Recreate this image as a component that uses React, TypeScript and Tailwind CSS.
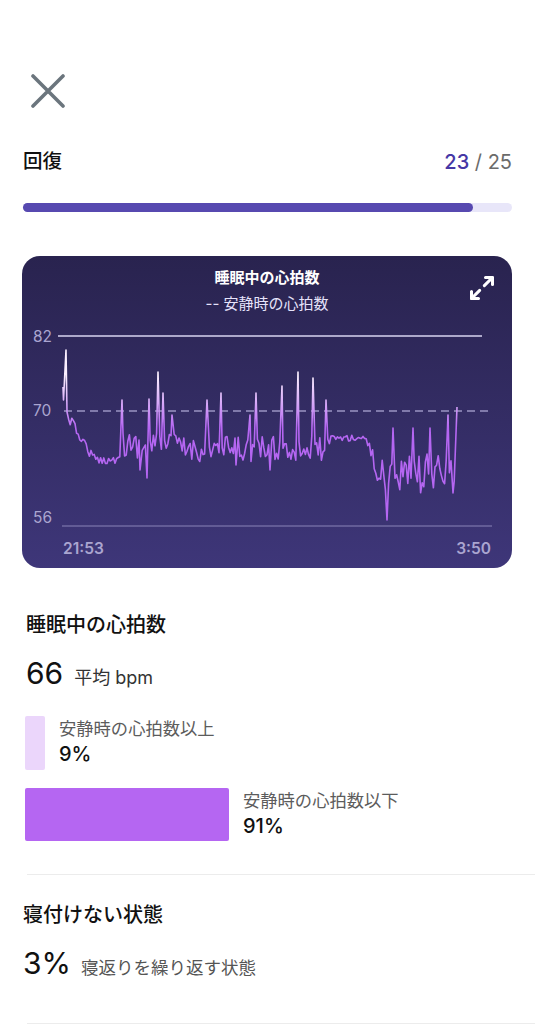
import React from "react";

const FONT = 'Inter, "Noto Sans CJK JP", sans-serif';

function rng(seed: number) {
  let s = seed;
  return () => {
    s = (s * 16807) % 2147483647;
    return (s - 1) / 2147483646;
  };
}

function buildPoints(): string {
  const r = rng(12345);
  const pts: [number, number][] = [];
  const base = (x: number): [number, number] => {
    if (x < 70) return [412 + (x - 66) * 2, 3];
    if (x < 96) return [420 + ((x - 70) / 26) * 42, 5];
    if (x < 118) return [460, 4];
    if (x < 180) return [445, 13];
    if (x < 330) return [449, 13];
    if (x < 367) return [438, 3];
    if (x < 380) return [438 + ((x - 367) / 13) * 45, 8];
    return [474, 20];
  };
  for (let x = 67; x <= 455; x += 1.6) {
    const [b, a] = base(x);
    pts.push([x, b + (r() * 2 - 1) * a]);
  }
  const spikes: [number, number][] = [
    [122, 400], [149, 399], [158, 372], [163, 393], [172, 415], [147, 478],
    [207, 400], [221, 393], [250, 415], [256, 393], [282, 386], [298, 372],
    [313, 378], [326, 400], [393, 428], [413, 428], [430, 428], [448, 415],
    [387, 520], [453, 493], [140, 470], [236, 465], [270, 470],
  ];
  const filtered = pts.filter((p) => !spikes.some((s) => Math.abs(s[0] - p[0]) < 0.9));
  const all = [...filtered, ...spikes].sort((a, b) => a[0] - b[0]);
  const head: [number, number][] = [[63, 387], [63.5, 400], [66, 350], [67, 412]];
  const tail: [number, number][] = [[457, 407]];
  return [...head, ...all.filter((p) => p[0] > 67), ...tail]
    .map(([x, y]) => `${(x - 22).toFixed(1)},${(y - 256).toFixed(1)}`)
    .join(" ");
}

const POINTS = buildPoints();

export default function App() {
  return (
    <div className="w-[535px] min-h-[1024px] bg-white overflow-hidden" style={{ fontFamily: FONT }}>
      <div className="pt-[74px] pl-[31px]">
        <svg width="34" height="34" viewBox="0 0 34 34">
          <path d="M2 2 L32 32 M32 2 L2 32" stroke="#6b757d" strokeWidth="3.6" strokeLinecap="round" />
        </svg>
      </div>

      <div className="mt-[40px] px-[23px] flex justify-between items-center h-[28px]">
        <span className="text-[19.5px] font-medium text-[#111]">回復</span>
        <span className="text-[20px] text-[#6b6b6b]">
          <span className="text-[#4637a5] font-medium">23</span> / 25
        </span>
      </div>

      <div className="mt-[27px] mx-[23px] h-[9px] rounded-full bg-[#e8e6f9]">
        <div className="h-full w-[92%] rounded-full bg-[#5749b0]" />
      </div>

      <div className="relative mt-[44px] ml-[22px] w-[490px] h-[312px] rounded-[18px] bg-gradient-to-b from-[#29234f] to-[#3e3679] overflow-hidden">
        <svg className="absolute inset-0" width="490" height="312" viewBox="0 0 490 312">
          <defs>
            <linearGradient id="lg" gradientUnits="userSpaceOnUse" x1="0" y1="120" x2="0" y2="172">
              <stop offset="0" stopColor="#fbefff" />
              <stop offset="1" stopColor="#b566f2" />
            </linearGradient>
          </defs>
          <line x1="36" y1="80" x2="460" y2="80" stroke="#d9d5f1" strokeWidth="1.5" />
          <line x1="42" y1="155" x2="470" y2="155" stroke="#9a94c2" strokeWidth="1.5" strokeDasharray="8 5" />
          <line x1="40" y1="270" x2="470" y2="270" stroke="#8a83b8" strokeWidth="1.2" />
          <polyline points={POINTS} fill="none" stroke="url(#lg)" strokeWidth="1.6" strokeLinejoin="round" />
          <g fontFamily={FONT} fontSize="15.5" fill="#aaa5d0">
            <text x="11" y="86">82</text>
            <text x="11" y="160">70</text>
            <text x="11" y="267">56</text>
            <text x="41" y="298" fontWeight="600">21:53</text>
            <text x="469" y="298" fontWeight="600" textAnchor="end">3:50</text>
          </g>
        </svg>
        <div className="relative pt-[12px] flex flex-col items-center">
          <div className="text-[15px] leading-[20px] font-bold text-white">睡眠中の心拍数</div>
          <div className="mt-[6px] text-[15px] leading-[20px] text-[#e6e3fb]">-- 安静時の心拍数</div>
        </div>
        <svg className="absolute right-[16px] top-[18px]" width="28" height="28" viewBox="0 0 24 24" fill="none" stroke="white" strokeWidth="2.6" strokeLinecap="round" strokeLinejoin="round">
          <polyline points="15 3 21 3 21 9" />
          <polyline points="9 21 3 21 3 15" />
          <line x1="21" y1="3" x2="14" y2="10" />
          <line x1="3" y1="21" x2="10" y2="14" />
        </svg>
      </div>

      <div className="mt-[43px] pl-[26px] text-[20px] leading-[28px] font-medium text-[#111]">睡眠中の心拍数</div>
      <div className="mt-[16px] pl-[26px] flex items-baseline h-[36px]">
        <span className="text-[30px] leading-[36px] text-[#111]">66</span>
        <span className="ml-[11px] text-[18px] text-[#333]">平均 bpm</span>
      </div>

      <div className="mt-[25px] pl-[25px] flex">
        <div className="w-[20px] h-[54px] rounded-[2px] bg-[#ebd6fb]" />
        <div className="ml-[14px] pt-[1px]">
          <div className="text-[17.3px] leading-[24px] text-[#5c5c5c]">安静時の心拍数以上</div>
          <div className="text-[20px] leading-[26px] font-medium text-[#111]">9%</div>
        </div>
      </div>

      <div className="mt-[18px] pl-[25px] flex">
        <div className="w-[204px] h-[53px] rounded-[2px] bg-[#b566f2]" />
        <div className="ml-[14px] pt-[1px]">
          <div className="text-[17.3px] leading-[24px] text-[#5c5c5c]">安静時の心拍数以下</div>
          <div className="text-[20px] leading-[26px] font-medium text-[#111]">91%</div>
        </div>
      </div>

      <div className="mt-[33px] ml-[27px] h-px bg-[#ececec]" />

      <div className="mt-[26px] pl-[23px] text-[20px] leading-[28px] font-medium text-[#111]">寝付けない状態</div>
      <div className="mt-[16px] pl-[23px] flex items-baseline h-[36px]">
        <span className="text-[30px] leading-[36px] text-[#111]">3%</span>
        <span className="ml-[10px] text-[17.5px] text-[#555]">寝返りを繰り返す状態</span>
      </div>

      <div className="mt-[42px] ml-[27px] h-px bg-[#ececec]" />
    </div>
  );
}
